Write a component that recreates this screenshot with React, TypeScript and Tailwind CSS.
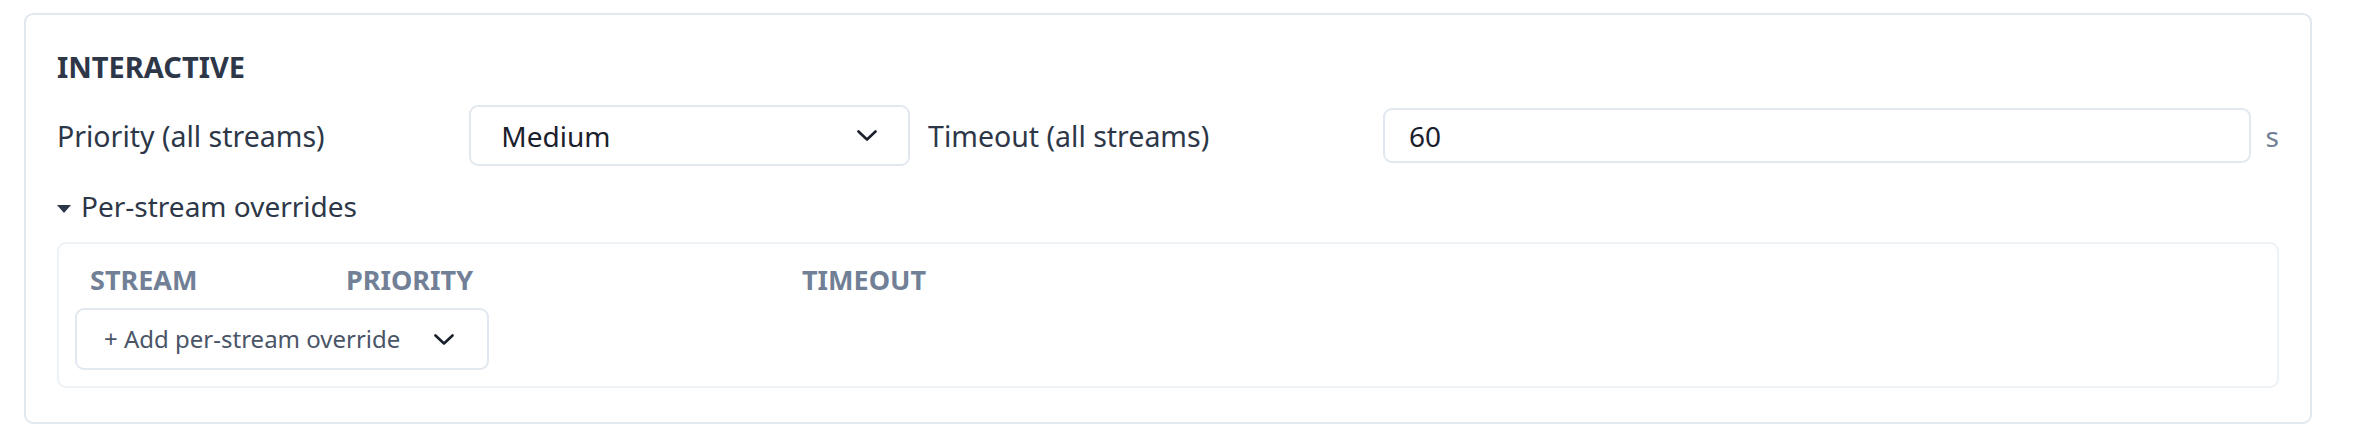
import { useState } from "react";

function Chevron() {
  return (
    <svg width="20" height="11" viewBox="0 0 20 11" fill="none" className="shrink-0">
      <path d="M1.5 1.5 L10 9.5 L18.5 1.5" stroke="#1a202c" strokeWidth="2.6" strokeLinecap="round" strokeLinejoin="round" />
    </svg>
  );
}

const COLUMNS = [
  { label: "STREAM", width: "w-[256px]" },
  { label: "PRIORITY", width: "w-[456px]" },
  { label: "TIMEOUT", width: "flex-1" },
];

export default function App() {
  const [open, setOpen] = useState(true);

  return (
    <div className="min-h-screen bg-white pt-[13px] pl-[24px]" style={{ fontFamily: '"Noto Sans", "Open Sans", sans-serif' }}>
      <section className="w-[2288px] rounded-[9px] border-2 border-[#e2e8f0] px-[31px] pt-[32px] pb-[34px]">
        <h2 className="text-[29px] leading-[40px] font-bold text-[#2d3748]">INTERACTIVE</h2>

        <div className="mt-[18px] flex h-[61px] items-center">
          <label className="w-[416px] text-[28.5px] leading-[40px] text-[#2d3748]">Priority (all streams)</label>
          <button className="flex h-[61px] w-[444px] items-center justify-between rounded-[9px] border-2 border-[#e2e8f0] bg-white pl-[30px] pr-[31px] text-[28px] text-[#1a202c]">
            <span>Medium</span>
            <Chevron />
          </button>
          <label className="ml-[18px] w-[459px] text-[28.5px] leading-[40px] text-[#2d3748]">Timeout (all streams)</label>
          <div className="flex h-[55px] w-[875px] items-center rounded-[9px] border-2 border-[#e2e8f0] pl-[24px] text-[28px] text-[#1a202c]">
            60
          </div>
          <span className="ml-[15px] text-[28px] text-[#718096]">s</span>
        </div>

        <button
          className="mt-[20px] flex h-[40px] items-center gap-[10px] text-[28px] leading-[40px] text-[#2d3748]"
          onClick={() => setOpen(!open)}
        >
          <svg width="14" height="8" viewBox="0 0 14 8" className="mt-[6px]">
            <polygon points="0,0 14,0 7,8" fill="#2d3748" />
          </svg>
          <span>Per-stream overrides</span>
        </button>

        {open && (
          <div className="mt-[16px] rounded-[9px] border-2 border-[#edf2f7] p-[16px]">
            <div className="flex h-[48px] pb-[8px]">
              {COLUMNS.map((col) => (
                <div key={col.label} className={`${col.width} pl-[15px] text-[27px] leading-[40px] font-bold text-[#718096]`}>
                  {col.label}
                </div>
              ))}
            </div>
            <button className="flex h-[62px] w-[414px] items-center justify-between rounded-[9px] border-2 border-[#e2e8f0] bg-white pl-[27px] pr-[33px] text-[24px] text-[#4a5568]">
              <span>+ Add per-stream override</span>
              <Chevron />
            </button>
          </div>
        )}
      </section>
    </div>
  );
}
